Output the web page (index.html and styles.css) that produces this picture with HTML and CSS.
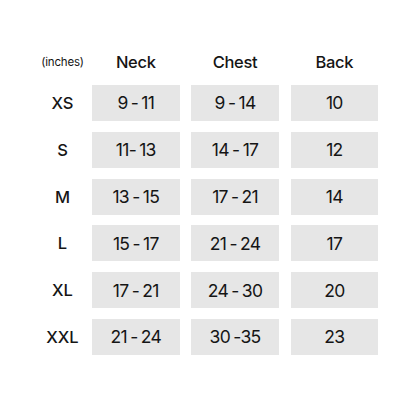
FILE: index.html
```html
<!DOCTYPE html>
<html>
<head>
<meta charset="utf-8">
<link rel="stylesheet" href="styles.css">
</head>
<body>
<div class="chart">
  <div class="corner"><span>(inches)</span></div>
  <div class="head">Neck</div>
  <div class="head">Chest</div>
  <div class="head">Back</div>

  <div class="size"><span>XS</span></div>
  <div class="cell">9 - 11</div>
  <div class="cell">9 - 14</div>
  <div class="cell">10</div>

  <div class="size"><span>S</span></div>
  <div class="cell">11- 13</div>
  <div class="cell">14 - 17</div>
  <div class="cell">12</div>

  <div class="size"><span>M</span></div>
  <div class="cell">13 - 15</div>
  <div class="cell">17 - 21</div>
  <div class="cell">14</div>

  <div class="size"><span>L</span></div>
  <div class="cell">15 - 17</div>
  <div class="cell">21 - 24</div>
  <div class="cell">17</div>

  <div class="size"><span>XL</span></div>
  <div class="cell">17 - 21</div>
  <div class="cell">24 - 30</div>
  <div class="cell">20</div>

  <div class="size"><span>XXL</span></div>
  <div class="cell">21 - 24</div>
  <div class="cell">30 -35</div>
  <div class="cell">23</div>
</div>
</body>
</html>
```
FILE: styles.css
```css
html, body {
  margin: 0;
  padding: 0;
  background: #ffffff;
}
body {
  width: 416px;
  height: 416px;
  font-family: Inter, "Noto Sans", sans-serif;
  color: #151515;
}
.chart {
  display: grid;
  grid-template-columns: 38.6px repeat(3, 87.6px);
  grid-template-rows: 24.4px repeat(6, 36px);
  column-gap: 11.7px;
  row-gap: 10.8px;
  padding: 49.8px 0 0 41.7px;
}
.corner, .size, .head, .cell {
  display: flex;
  align-items: center;
  justify-content: center;
  white-space: nowrap;
}
.corner {
  font-size: 11.5px;
  font-weight: 400;
  letter-spacing: -0.2px;
}
.corner span, .size span {
  position: relative;
  left: 1.5px;
}
.head {
  font-size: 16.5px;
  font-weight: 500;
  letter-spacing: -0.3px;
}
.size {
  font-size: 16.5px;
  font-weight: 500;
}
.cell {
  background: #e6e6e6;
  font-size: 17.5px;
  font-weight: 400;
  font-variant-numeric: proportional-nums;
  letter-spacing: -0.7px;
  word-spacing: -1px;
}
```
